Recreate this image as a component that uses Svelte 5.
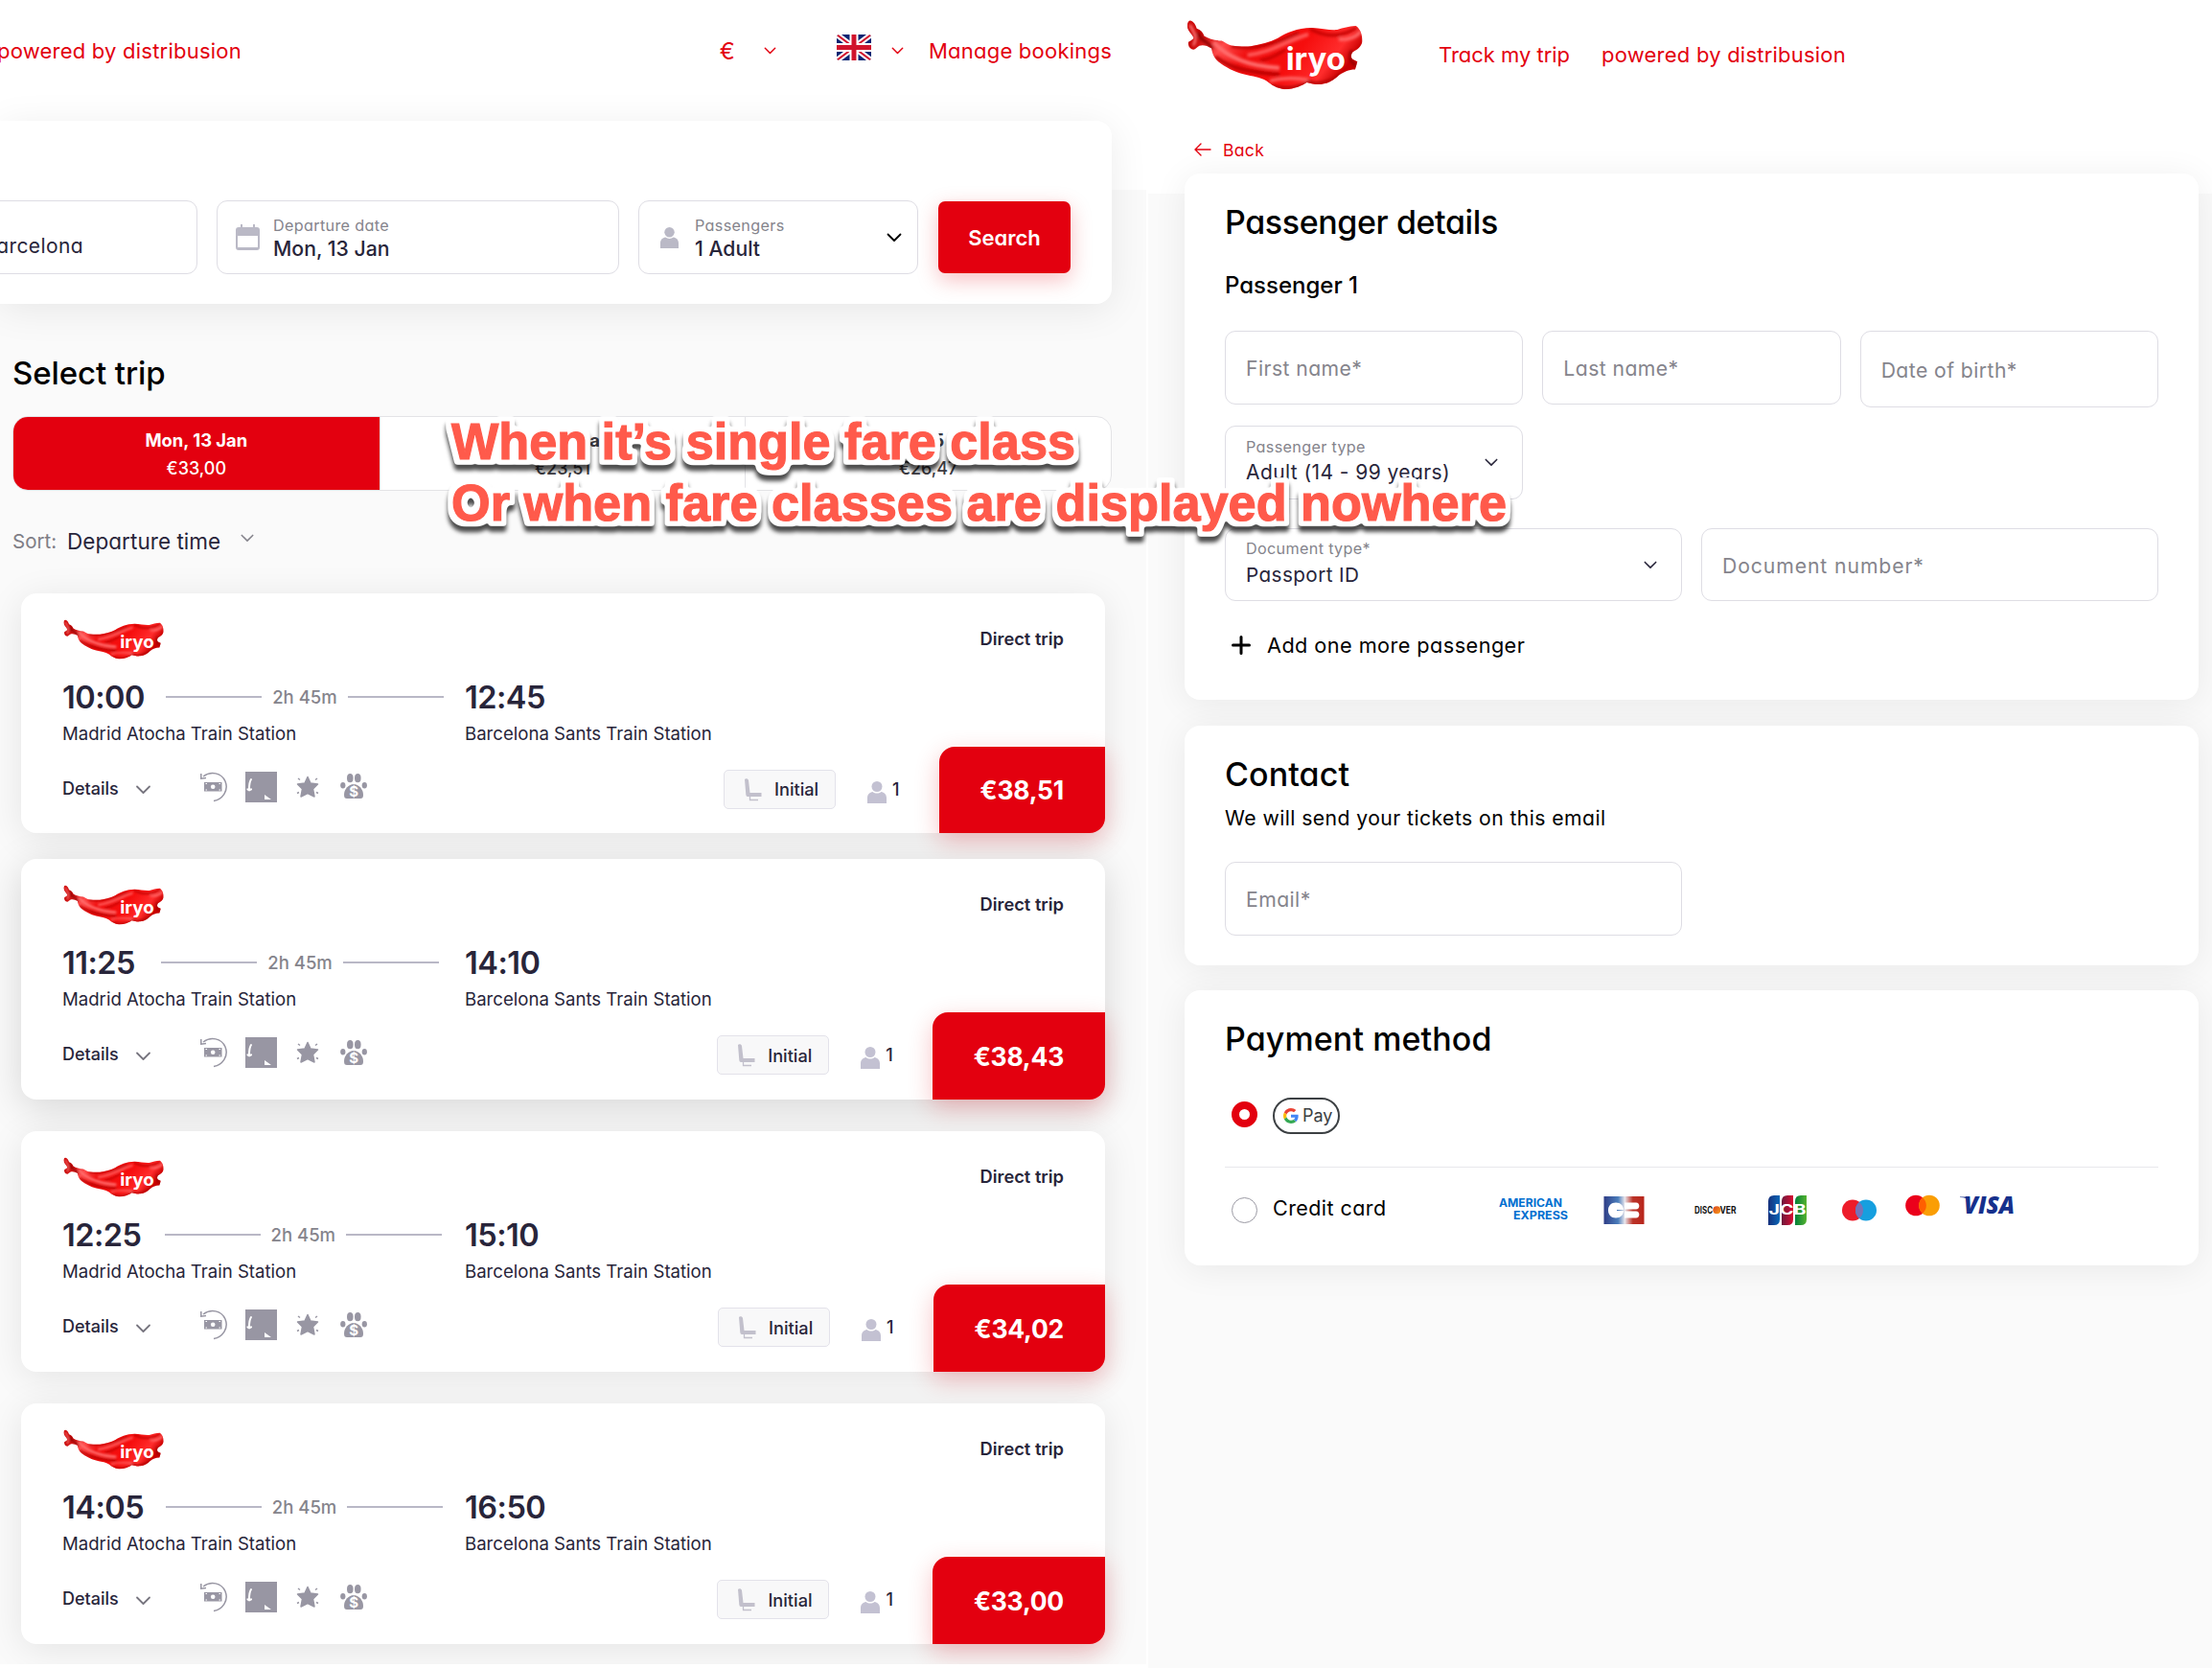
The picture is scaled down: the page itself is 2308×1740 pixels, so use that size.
<script>
  const trips = [
    { dep: '10:00', arr: '12:45', price: '€38,51' },
    { dep: '11:25', arr: '14:10', price: '€38,43', active: true },
    { dep: '12:25', arr: '15:10', price: '€34,02' },
    { dep: '14:05', arr: '16:50', price: '€33,00' }
  ];
  const days = [
    { date: 'Mon, 13 Jan', price: '€33,00', selected: true },
    { date: 'Tue, 14 Jan', price: '€23,51' },
    { date: 'Wed, 15 Jan', price: '€26,47' }
  ];
</script>

{#snippet chevron(cls)}
  <svg class="chev {cls}" viewBox="0 0 16 10" fill="none" stroke="currentColor" stroke-width="1.8" stroke-linecap="round" stroke-linejoin="round"><path d="M1.5 1.5 8 8l6.500-6.500" /></svg>
{/snippet}

{#snippet person(cls)}
  <svg class={cls} viewBox="0 0 20 23" fill="currentColor"><circle cx="10" cy="5.500" r="5.500" /><path d="M0 23v-5.500C0 13.500 2.600 11.500 5.500 11c2.700 2 6.300 2 9 0 2.900.5 5.500 2.500 5.500 6.500V23z" /></svg>
{/snippet}

{#snippet logo(cls)}
  <svg class={cls} viewBox="40 36 550 218">
    <defs>
      <linearGradient id="silk" x1="0" y1="0" x2="1" y2="0.3">
        <stop offset="0" stop-color="#d30a0a" /><stop offset="0.14" stop-color="#c40303" /><stop offset="0.3" stop-color="#ff4a4a" /><stop offset="0.45" stop-color="#f01010" /><stop offset="0.7" stop-color="#f60d0d" /><stop offset="0.9" stop-color="#ff2c2c" /><stop offset="1" stop-color="#c80000" />
      </linearGradient>
      <filter id="soft" x="-20%" y="-20%" width="140%" height="140%"><feGaussianBlur stdDeviation="5" /></filter>
      <clipPath id="cloth"><path d="M52 37C62 40 68 50 72 62C84 66 92 74 95 85C110 94 128 100 150 100C160 105 168 112 180 115C205 118 225 119 240 117C270 113 300 105 325 92C350 76 385 61 430 60C460 62 490 68 510 66C530 60 545 55 568 54C582 62 590 85 588 105C584 120 574 128 558 136C552 145 552 152 558 158L573 165L566 190C545 190 530 198 515 208C500 222 485 233 460 236C445 238 430 234 415 230C400 240 380 250 345 252C320 248 305 238 290 226C270 213 245 212 220 205C190 198 160 182 140 166C124 152 120 138 118 124C105 116 92 112 80 116C72 120 68 127 62 128C50 126 44 116 46 104C54 100 62 96 62 90C58 80 44 70 42 55C42 45 46 38 52 37Z" /></clipPath>
    </defs>
    <g clip-path="url(#cloth)">
      <rect x="30" y="30" width="570" height="230" fill="url(#silk)" />
      <g filter="url(#soft)" fill="none">
        <path d="M50 50C65 75 75 95 60 115" stroke="#ff7a7a" stroke-width="8" />
        <path d="M75 75C80 100 115 105 120 125" stroke="#8d0000" stroke-width="10" />
        <path d="M125 105C165 150 235 180 330 185" stroke="#ff7070" stroke-width="13" />
        <path d="M130 150C180 190 250 200 330 205" stroke="#b80000" stroke-width="11" />
        <path d="M180 118C250 130 320 110 390 75" stroke="#b40000" stroke-width="8" />
        <path d="M230 145C310 135 340 105 420 80" stroke="#ff5a5a" stroke-width="12" />
        <path d="M270 160C310 160 345 125 350 130" stroke="#c00000" stroke-width="8" />
        <path d="M425 62C480 95 530 85 570 60" stroke="#c00000" stroke-width="9" />
        <path d="M515 95C545 100 575 85 583 70" stroke="#ff6c6c" stroke-width="10" />
        <path d="M300 225C340 215 380 215 420 222" stroke="#ff6a6a" stroke-width="9" />
        <path d="M300 240C350 255 400 245 420 228C450 240 500 225 520 205" stroke="#b00000" stroke-width="9" />
        <path d="M556 130C545 150 550 170 575 180" stroke="#900000" stroke-width="8" />
      </g>
    </g>
    <text class="brand" x="350" y="190" textLength="186" lengthAdjust="spacingAndGlyphs">iryo</text>
  </svg>
{/snippet}

<div class="page">
  <section class="left">
    <header class="bar">
      <span class="pop t22">powered by distribusion</span>
      <div class="tools">
        <span class="pop t22 euro">€</span>
        {@render chevron('c1')}
        <svg class="flag" viewBox="0 0 36 27"><defs><clipPath id="fl"><rect width="36" height="27" rx="3" /></clipPath></defs><g clip-path="url(#fl)"><rect width="36" height="27" fill="#0a2472" /><path d="M0 0 36 27M36 0 0 27" stroke="#fff" stroke-width="6" /><path d="M0 0 36 27M36 0 0 27" stroke="#d0142c" stroke-width="2" /><path d="M18 0v27M0 13.500h36" stroke="#fff" stroke-width="9" /><path d="M18 0v27M0 13.500h36" stroke="#d0142c" stroke-width="5" /></g></svg>
        {@render chevron('c2')}
        <span class="pop t22">Manage bookings</span>
      </div>
    </header>
    <div class="search">
      <div class="field dest"><span class="pop val">Barcelona</span></div>
      <div class="field date">
        <svg class="cal" viewBox="0 0 25 28" fill="#bab9c6"><path fill-rule="evenodd" d="M5 0h2v3h11V0h2v3h2a3 3 0 0 1 3 3v18a3 3 0 0 1-3 3H3a3 3 0 0 1-3-3V6a3 3 0 0 1 3-3h2zM2 12v12h21V12z" /></svg>
        <div class="stack"><span class="pop lab">Departure date</span><span class="val med">Mon, 13 Jan</span></div>
      </div>
      <div class="field pax">
        {@render person('pico')}
        <div class="stack"><span class="pop lab">Passengers</span><span class="val med">1 Adult</span></div>
        {@render chevron('c3')}
      </div>
      <button class="go"><span class="pop tight">Search</span></button>
    </div>
    <h1 class="pop">Select trip</h1>
    <div class="days">
      {#each days as d}
        <div class="day" class:selected={d.selected}><span class="dd">{d.date}</span><span class="dp">{d.price}</span></div>
      {/each}
    </div>
    <div class="sort"><span class="pop sl">Sort:</span><span class="pop sv">Departure time</span>{@render chevron('c4')}</div>
    <div class="trips">
      {#each trips as t}
        <article class="trip" class:active={t.active}>
          <div class="top">{@render logo('lsm')}<span class="direct">Direct trip</span></div>
          <div class="times">
            <div class="leg">
              <span class="time">{t.dep}</span>
              <div class="dur"><i></i><span>2h 45m</span><i></i></div>
            </div>
            <span class="time">{t.arr}</span>
          </div>
          <div class="stations"><span>Madrid Atocha Train Station</span><span>Barcelona Sants Train Station</span></div>
          <div class="foot">
            <span class="details">Details</span>{@render chevron('c5')}
            <div class="perks">
              <svg class="k1" viewBox="0 0 28 32"><path d="M3 5C11-1 22 1 26 10c4 10-3 19-12 20.500" fill="none" stroke="#9896a3" stroke-width="1.500" /><path d="M.8 2v5.200L6 6.500" fill="none" stroke="#9896a3" stroke-width="1.500" /><path fill="#9896a3" d="M4 11h18.500v9.500H4z" /><circle cx="13.200" cy="15.800" r="2.300" fill="#fff" /><path d="M5.500 12.500h1.500M5.500 19h1.500M19.500 12.500H21M19.500 19H21" stroke="#fff" /></svg>
              <svg class="k2" viewBox="0 0 33 32"><path fill="#9896a3" d="M0 0h33v32H0z" /><path d="M6 8C4 11 4 14 4 18" fill="none" stroke="#fff" stroke-width="2" stroke-linecap="round" /><path d="M1.500 17.500H7V19L4 20.500 1.500 19zM20 24l7 5h-7z" fill="#fff" /></svg>
              <svg class="k3" viewBox="0 0 24 24" fill="#9896a3"><path stroke="#9896a3" stroke-width="1.500" stroke-linejoin="round" d="m12 1.500 3 6.500 7.500 1-5 5 1.500 8-7-3.500L5 22l1.500-8-5-5L9 8z" /><path d="m2 3 2 1.500M22 3l-2 1.500M1 18.500 3 17.500M23 18.500 21 17.500" stroke="#9896a3" stroke-width="1.500" /></svg>
              <svg class="k4" viewBox="0 0 28 27" fill="#9896a3"><ellipse cx="10.300" cy="4.700" rx="3.300" ry="4.600" /><ellipse cx="18.300" cy="4.700" rx="3.300" ry="4.600" /><ellipse cx="2.800" cy="12.200" rx="2.600" ry="3.300" /><ellipse cx="25.300" cy="12.200" rx="2.600" ry="3.300" /><path d="M14 11c5 0 10 5 10 11 0 3-1 4-3 4H7c-2 0-3-1-3-4 0-6 5-11 10-11z" /><text class="dollar" x="14.200" y="24" text-anchor="middle">$</text></svg>
            </div>
            <div class="class">
              <svg class="seat" viewBox="0 0 18 24"><path fill="#c2c0cc" d="M0 1C1-.3 3.500 0 4 2l1.500 13H17.500v4H3Q1.500 19 1.300 17z" /><path d="M5.500 19v3.500H14" fill="none" stroke="#c2c0cc" stroke-width="1.300" /></svg>
              <span>Initial</span>
            </div>
            <div class="count">{@render person('pcnt')}<span>1</span></div>
            <div class="price"><span>{t.price}</span></div>
          </div>
        </article>
      {/each}
    </div>
  </section>

  <section class="right">
    <header class="rbar">
      {@render logo('lbig')}
      <span class="pop t22 tight">Track my trip</span>
      <span class="pop t22">powered by distribusion</span>
    </header>
    <div class="back">
      <svg viewBox="0 0 18 14" fill="none" stroke="currentColor" stroke-width="1.400" stroke-linecap="round" stroke-linejoin="round"><path d="M17 7H1.500M7 1 1 7l6 6" /></svg>
      <span class="pop">Back</span>
    </div>
    <div class="panel p1">
      <h2 class="pop long">Passenger details</h2>
      <h3 class="pop tight">Passenger 1</h3>
      <div class="three">
        <div class="field"><span class="pop ph">First name*</span></div>
        <div class="field"><span class="pop ph">Last name*</span></div>
        <div class="field dob"><span class="pop ph">Date of birth*</span></div>
        <div class="field sel"><div class="stack"><span class="pop lab">Passenger type</span><span class="pop val v1">Adult (14 - 99 years)</span></div>{@render chevron('c6')}</div>
      </div>
      <div class="two">
        <div class="field sel doc"><div class="stack"><span class="pop lab">Document type*</span><span class="pop val v2">Passport ID</span></div>{@render chevron('c6')}</div>
        <div class="field"><span class="pop ph wide">Document number*</span></div>
      </div>
      <div class="add"><svg viewBox="0 0 20 20" stroke="#000" stroke-width="3" stroke-linecap="round"><path d="M10 1.500v17M1.500 10h17" /></svg><span class="pop">Add one more passenger</span></div>
    </div>
    <div class="panel p2">
      <h2 class="pop">Contact</h2>
      <div class="note"><span class="pop">We will send your tickets on this email</span></div>
      <div class="two"><div class="field"><span class="pop ph">Email*</span></div></div>
    </div>
    <div class="panel p3">
      <h2 class="pop">Payment method</h2>
      <div class="opt g">
        <div class="radio on"></div>
        <div class="gpay">
          <svg viewBox="0 0 48 48"><path fill="#EA4335" d="M24 9.500c3.540 0 6.710 1.220 9.210 3.600l6.850-6.850C35.900 2.380 30.470 0 24 0 14.620 0 6.510 5.380 2.560 13.220l7.980 6.190C12.430 13.720 17.740 9.500 24 9.500z" /><path fill="#4285F4" d="M46.980 24.550c0-1.570-.15-3.090-.38-4.550H24v9.020h12.940c-.58 2.960-2.260 5.480-4.780 7.180l7.730 6c4.510-4.180 7.090-10.360 7.090-17.650z" /><path fill="#FBBC05" d="M10.530 28.590A14.500 14.500 0 0 1 9.770 24c0-1.600.27-3.140.76-4.590l-7.980-6.190A23.900 23.900 0 0 0 0 24c0 3.880.92 7.540 2.560 10.780z" /><path fill="#34A853" d="M24 48c6.480 0 11.930-2.130 15.890-5.810l-7.730-6c-2.150 1.450-4.920 2.300-8.160 2.300-6.260 0-11.570-4.220-13.470-9.910l-7.980 6.190C6.510 42.620 14.620 48 24 48z" /></svg>
          <span>Pay</span>
        </div>
      </div>
      <div class="opt c">
        <div class="radio"></div>
        <span class="pop cc">Credit card</span>
        <svg class="cards" viewBox="0 0 544 40">
          <defs>
            <linearGradient id="cb"><stop offset="0" stop-color="#2f3d86" /><stop offset=".35" stop-color="#4a7dbb" /><stop offset=".52" stop-color="#e9e6ec" /><stop offset=".72" stop-color="#bb3328" /><stop offset="1" stop-color="#b8261c" /></linearGradient>
            <linearGradient id="jb"><stop offset="0" stop-color="#16307c" /><stop offset="1" stop-color="#0a67b8" /></linearGradient>
            <linearGradient id="jr"><stop offset="0" stop-color="#6c1a3c" /><stop offset="1" stop-color="#d80b32" /></linearGradient>
            <linearGradient id="jg"><stop offset="0" stop-color="#04803a" /><stop offset="1" stop-color="#55b32f" /></linearGradient>
            <linearGradient id="dc" x2="1" y2="1"><stop offset="0" stop-color="#d9401c" /><stop offset="1" stop-color="#fba01e" /></linearGradient>
          </defs>
          <g class="amex"><text x="4" y="18.500" textLength="66" lengthAdjust="spacingAndGlyphs">AMERICAN</text><text x="19" y="31.500" textLength="57" lengthAdjust="spacingAndGlyphs">EXPRESS</text></g>
          <rect x="113.500" y="8" width="42" height="29" fill="url(#cb)" />
          <path fill="#fff" d="M134 22h-7v1h7c0 4-3 7.500-8 7.500s-8-3.500-8-8 3-8 8-8 8 3.500 8 7.500zM135 14.500h12c4.500 0 4.500 7 0 7h-12zM135 23.500h12c4.500 0 4.500 7 0 7h-12z" />
          <g class="disc"><text x="208" y="26" textLength="19" lengthAdjust="spacingAndGlyphs">DISC</text><text x="234.500" y="26" textLength="17" lengthAdjust="spacingAndGlyphs">VER</text></g>
          <circle cx="231.300" cy="22.200" r="4" fill="url(#dc)" />
          <path fill="url(#jb)" d="M285 13q0-6 6-6h6v25q0 6-6 6h-6z" /><path fill="url(#jr)" d="M299 13q0-6 6-6h6v25q0 6-6 6h-6z" /><path fill="url(#jg)" d="M313 13q0-6 6-6h6v25q0 6-6 6h-6z" />
          <text class="jcb" x="285.500" y="27" textLength="39" lengthAdjust="spacingAndGlyphs">JCB</text>
          <circle cx="373" cy="22.500" r="11" fill="#ed1c2a" /><circle cx="387" cy="22.500" r="11" fill="#169fdf" /><path d="M380 14a11 11 0 0 1 0 17 11 11 0 0 1 0-17z" fill="#7673b8" />
          <circle cx="439" cy="17.500" r="10.800" fill="#eb001b" /><circle cx="453" cy="17.500" r="10.800" fill="#fa9e04" /><path d="M446 9.200a10.800 10.800 0 0 1 0 16.600 10.800 10.800 0 0 1 0-16.600z" fill="#ff5f00" />
          <text class="visa" x="489" y="26" textLength="53" lengthAdjust="spacingAndGlyphs">VISA</text><path d="M485 8.500h8l2 4c-2-2-5-3.300-10-3.500z" fill="#16308c" />
        </svg>
      </div>
    </div>
  </section>

  <svg class="note-layer" viewBox="0 0 1140 160">
    <defs>
      <!-- rounded white outline with a soft shadow underneath -->
      <filter id="sticker" filterUnits="userSpaceOnUse" x="-10" y="-10" width="1160" height="180" color-interpolation-filters="sRGB">
        <feMorphology in="SourceAlpha" operator="dilate" radius="5" />
        <feGaussianBlur stdDeviation="1.6" />
        <feComponentTransfer result="ring"><feFuncA type="linear" slope="4" intercept="-1.2" /></feComponentTransfer>
        <feOffset in="ring" dy="6" result="drop" />
        <feGaussianBlur in="drop" stdDeviation="2" result="dropBlur" />
        <feFlood flood-color="#000" flood-opacity="0.7" />
        <feComposite in2="dropBlur" operator="in" result="shadow" />
        <feFlood flood-color="#fff" />
        <feComposite in2="ring" operator="in" result="white" />
        <feMerge><feMergeNode in="shadow" /><feMergeNode in="white" /><feMergeNode in="SourceGraphic" /></feMerge>
      </filter>
    </defs>
    <g class="marker"><text x="11" y="59" textLength="651" lengthAdjust="spacingAndGlyphs">When it’s single fare class</text><text x="11" y="123" textLength="1101" lengthAdjust="spacingAndGlyphs">Or when fare classes are displayed nowhere</text></g>
  </svg>
</div>

<style>
  :global(body) { background: #fff; }
  * { box-sizing: border-box; }
  .page { position: relative; display: flex; gap: 2px; width: 2308px; height: 1740px; overflow: hidden; background: #fff; font-family: Inter, "Liberation Sans", sans-serif; color: #28253a; }
  span, h1, h2, h3 { white-space: nowrap; }
  h1, h2, h3 { margin: 0; font-weight: 450; color: #000; }
  svg { display: block; flex: none; }
  .pop { font-feature-settings: "cv11"; letter-spacing: 0.02em; }
  .pop.tight { letter-spacing: 0; }
  .t22 { font-size: 22px; color: #e3000f; }
  .pop.t22 { letter-spacing: 0.22px; }
  .pop.t22.tight { letter-spacing: -0.02px; }
  .left { width: 1196px; height: 1736px; flex: none; overflow: hidden; background: linear-gradient(#fff 198px, #fafafa 198px); }
  .right { width: 1110px; flex: none; padding: 0 14px 0 38px; background: linear-gradient(#fff 202px, #fafafa 202px); }
  .bar { height: 106px; display: flex; align-items: center; justify-content: space-between; padding-right: 36px; margin-left: -3px; color: #e3000f; }
  .tools { display: flex; align-items: center; }
  .euro { font-size: 24px; }
  .chev { width: 16px; height: 10px; }
  .c1 { width: 13px; height: 8px; margin: 0 63px 0 30px; }
  .flag { width: 36px; height: 27px; margin-bottom: 7px; }
  .c2 { width: 13px; height: 8px; margin: 0 26px 0 21px; }
  .search { margin-top: 20px; width: 1160px; height: 191px; background: #fff; border-radius: 0 16px 16px 0; box-shadow: 0 6px 40px rgba(0, 0, 0, 0.08); padding: 83px 42px 0 0; display: flex; gap: 20px; }
  .field { height: 77px; border: 1.500px solid #dedde4; border-radius: 11px; display: flex; align-items: center; background: #fff; flex: none; }
  .dest { width: 226px; margin-left: -20px; padding: 19px 0 0 1px; }
  .dest .val { font-size: 21px; }
  .date { width: 420px; padding-left: 19px; gap: 14px; }
  .pax { width: 292px; padding: 0 16px 0 22px; gap: 17px; }
  .cal { width: 25px; height: 28px; }
  .pico { width: 19px; height: 22px; color: #bab9c6; }
  .c3 { margin-left: auto; color: #000; }
  .stack { display: flex; flex-direction: column; gap: 2px; }
  .lab { font-size: 16.200px; line-height: 20px; color: #85848c; }
  .val { font-size: 20px; line-height: 24px; }
  .val.med { font-size: 21.200px; font-weight: 500; }
  .go { flex: none; width: 138px; height: 75px; margin: 1px 0 0 1px; border: 0; padding: 0; border-radius: 7px; background: #e3000f; color: #fff; font: 600 22px Inter, sans-serif; box-shadow: 0 7px 22px rgba(227, 0, 15, 0.25); }
  h1 { font-size: 33px; line-height: 40px; margin: 52px 0 25px 13px; }
  h1.pop { letter-spacing: -0.1px; }
  .days { display: grid; grid-template-columns: repeat(3, 1fr); width: 1147px; height: 78px; margin: 0 0 -1px 13px; border: 1px solid #e3e3e6; border-radius: 16px; overflow: hidden; background: #fff; }
  .day { display: flex; flex-direction: column; align-items: center; justify-content: center; gap: 6px; padding-top: 1px; border-left: 1px solid #e3e3e6; font-size: 18px; line-height: 24px; color: #3c3b42; }
  .day.selected { background: #e3000f; color: #fff; border: 0; }
  .dd { font-size: 18.400px; font-weight: 700; }
  .dp { font-weight: 500; }
  .sort { display: flex; align-items: center; height: 28px; margin: 39px 0 0 13px; }
  .sl { font-size: 20.500px; color: #7f7e86; width: 57px; letter-spacing: 0; }
  .sv { font-size: 22.500px; }
  .pop.sv { letter-spacing: 0.05px; }
  .c4 { width: 14px; height: 9px; margin: -6px 0 0 21px; color: #85848c; }
  .trips { margin: 41px 0 0 22px; width: 1131px; display: flex; flex-direction: column; gap: 33px; }
  .trip { height: 251px; border-radius: 16px; background: #fff; box-shadow: 0 6px 38px rgba(0, 0, 0, 0.09); padding: 27px 0 0 43px; display: flex; flex-direction: column; }
  .trip:first-child { height: 250px; margin-bottom: -6px; }
  .trip.active { box-shadow: 0 8px 40px rgba(0, 0, 0, 0.15); }
  .top { display: flex; height: 41px; align-items: center; justify-content: space-between; padding-right: 43px; }
  .lsm { width: 105px; height: 42px; margin-left: 1px; }
  .lbig { width: 184px; height: 73px; margin-right: 79px; }
  .brand { font: 700 96px Inter, sans-serif; fill: #fff; }
  .direct { font-size: 18.300px; font-weight: 600; margin-top: -1px; }
  .times { display: flex; align-items: center; height: 40px; margin-top: 20px; }
  .leg { display: flex; align-items: center; width: 420px; flex: none; }
  .time { font-size: 32.500px; font-weight: 600; letter-spacing: -0.5px; }
  .dur { flex: 1; display: flex; align-items: center; justify-content: center; gap: 11px; font-size: 18.500px; font-weight: 500; color: #85848c; }
  .dur i { width: 100px; height: 2px; background: #b9b8c6; }
  .stations { display: grid; grid-template-columns: 420px auto; margin-top: 6px; font-size: 18.600px; line-height: 24px; }
  .foot { margin-top: auto; height: 91px; display: flex; align-items: center; }
  .trip:first-child .foot { height: 90px; }
  .details { font-size: 18px; font-weight: 500; margin-top: -4px; }
  .c5 { width: 17px; height: 10px; margin: 0 51px 0 17px; color: #77757f; }
  .perks { display: flex; align-items: center; margin-top: -7px; }
  .k1 { width: 28px; height: 32px; margin-right: 19px; }
  .k2 { width: 33px; height: 32px; margin-right: 20px; }
  .k3 { width: 24px; height: 24px; margin-right: 22px; }
  .k4 { width: 28px; height: 27px; }
  .dollar { font: 700 15px Inter, sans-serif; fill: #fff; }
  .class { margin: -2px 0 0 auto; width: 117px; height: 41px; border: 1.500px solid #e3e2ea; border-radius: 5px; background: #f8f8f9; display: flex; align-items: center; padding-left: 21px; gap: 13px; font-size: 18.200px; font-weight: 500; }
  .seat { width: 18px; height: 24px; margin-top: 1px; }
  .count { display: flex; align-items: center; gap: 6px; margin: -2px 41px 0 33px; font-size: 18px; font-weight: 500; }
  .pcnt { width: 20px; height: 23px; margin-top: 6px; color: #c3c1d2; }
  .price { height: 100%; padding: 0 43px; display: flex; align-items: center; background: #e3000f; color: #fff; border-radius: 16px 0 16px 0; font-size: 26.500px; letter-spacing: -0.25px; font-weight: 700; box-shadow: 0 8px 26px rgba(227, 0, 15, 0.24); }
  .rbar { height: 114px; display: flex; align-items: center; padding-left: 2px; gap: 0; }
  .rbar span:last-child { margin-left: 33px; }
  .back { height: 24px; margin: 30px 0 13px 10px; display: flex; align-items: center; gap: 12px; font-size: 17.500px; color: #e3000f; }
  .back svg { width: 18px; height: 14px; }
  .panel { width: 1058px; background: #fff; border-radius: 16px; padding: 31px 42px 0; box-shadow: 0 4px 36px rgba(0, 0, 0, 0.07); }
  .p1 { height: 549px; }
  .p2 { height: 250px; margin-top: 27px; }
  .p3 { height: 287px; margin-top: 26px; }
  h2 { font-size: 34px; line-height: 40px; }
  h2.pop { letter-spacing: 0.1px; }
  h2.pop.long { letter-spacing: -0.4px; }
  h3 { font-size: 24px; line-height: 30px; margin: 31px 0 32px; }
  .three { display: grid; grid-template-columns: repeat(3, 1fr); column-gap: 20px; row-gap: 19px; align-items: start; }
  .two { display: grid; grid-template-columns: 1fr 1fr; gap: 20px; margin-top: 30px; }
  .two .field { height: 76px; }
  .panel .field { padding-left: 21px; }
  .panel .dob { height: 80px; }
  .ph { font-size: 21.200px; color: #85848c; margin-top: 1px; }
  .pop.ph.wide { letter-spacing: 0.9px; }
  .sel { padding-right: 25px; }
  .sel .stack { gap: 5px; margin-top: -4px; }
  .doc .stack { gap: 6px; margin-top: -4px; }
  .v1 { font-size: 21px; }
  .v2 { font-size: 20.700px; }
  .c6 { width: 14px; height: 9px; margin-left: auto; }
  .add { display: flex; align-items: center; gap: 17px; height: 30px; margin: 31px 0 0 7px; font-size: 21.700px; color: #000; }
  .add svg { width: 20px; height: 20px; }
  .add span { margin-top: -1px; }
  .note { height: 28px; margin-top: 11px; font-size: 21.200px; line-height: 28px; color: #000; }
  .p2 .two { margin-top: 32px; }
  .p2 .two .field { height: 77px; }
  .opt { display: flex; align-items: center; }
  .g { height: 41px; margin-top: 39px; padding-left: 7px; }
  .radio { width: 27px; height: 27px; border-radius: 50%; border: 1.500px solid #9a99a3; }
  .radio.on { border: 8px solid #e3000f; margin-top: -2px; }
  .gpay { width: 70px; height: 38px; border: 2px solid #3c4043; border-radius: 19px; margin-left: 16px; display: flex; align-items: center; padding-left: 9px; gap: 4px; font-size: 18px; color: #3c4043; }
  .gpay svg { width: 16px; height: 16px; }
  .c { height: 76px; margin-top: 33px; border-top: 1px solid #e8e8ec; padding-left: 7px; padding-top: 13px; }
  .cc { font-size: 21.500px; color: #000; margin: -4px 0 0 16px; width: 232px; }
  .cards { width: 544px; height: 40px; margin-top: -4px; }
  .amex { font: 700 11.500px Inter, sans-serif; fill: #016fd0; }
  .disc { font: 700 10px Inter, sans-serif; fill: #111; }
  .jcb { font: 700 15px Inter, sans-serif; fill: #fff; }
  .visa { font: italic 800 24px "Open Sans", sans-serif; fill: #16308c; }
  .note-layer { position: absolute; left: 460px; top: 420px; width: 1140px; height: 160px; overflow: visible; }
  .marker { font: 700 53px "Liberation Sans", Arial, sans-serif; fill: #ff5a4b; stroke: #ff5a4b; stroke-width: 1.200px; filter: url(#sticker); }
</style>
